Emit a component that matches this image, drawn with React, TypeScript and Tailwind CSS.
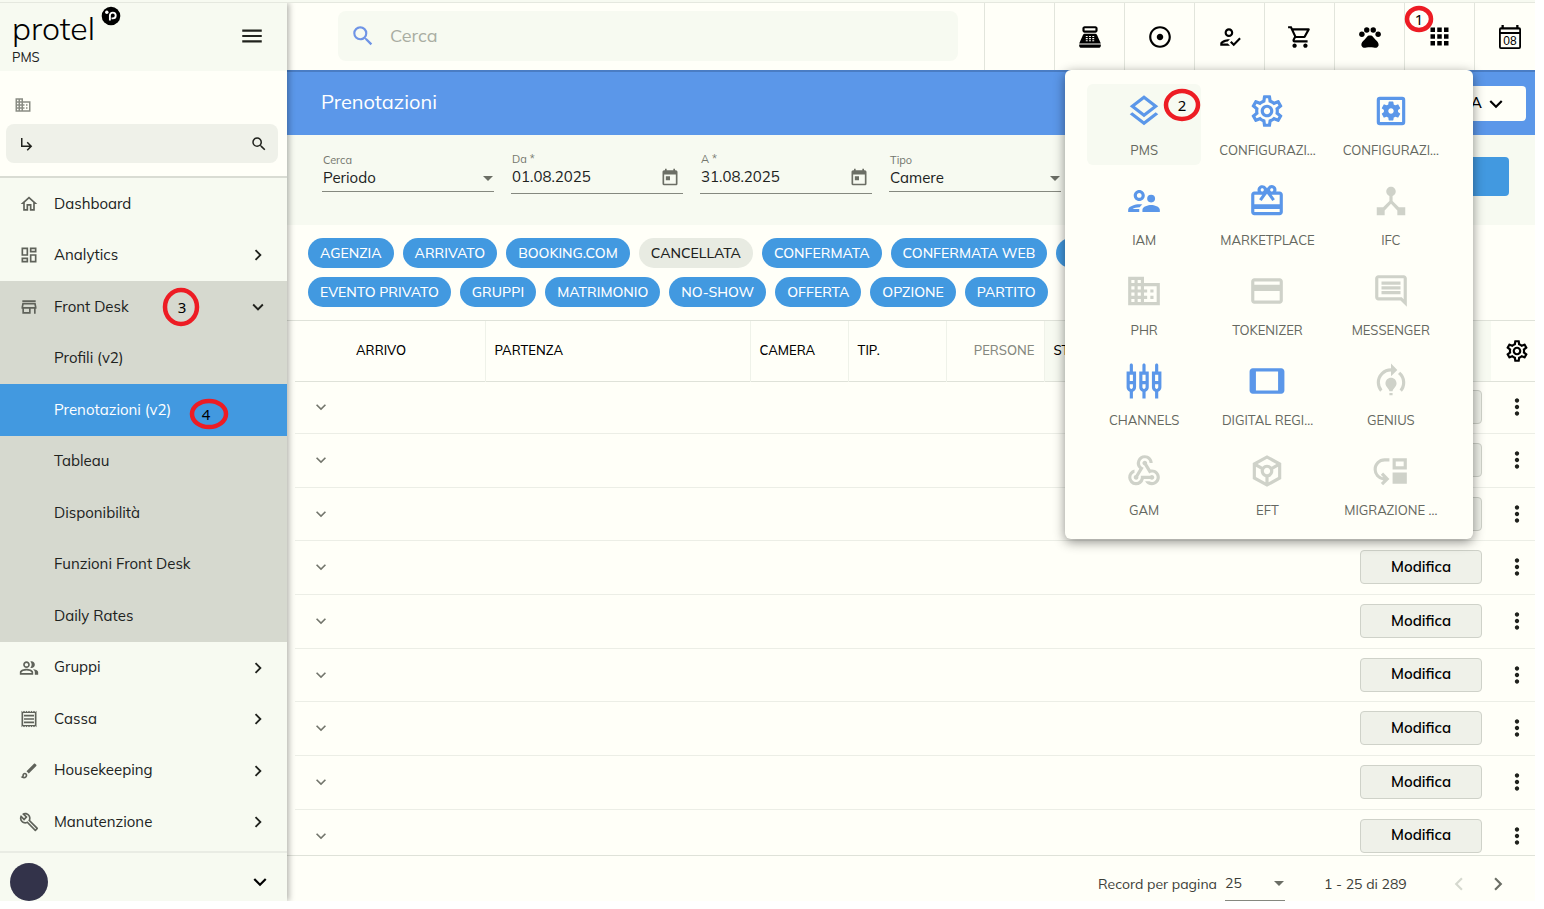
import React from 'react';
import type { ComponentType, ReactNode } from 'react';
import {
  MdAdjust,
  MdApps,
  MdArrowDropDown,
  MdChevronLeft,
  MdChevronRight,
  MdDeviceHub,
  MdExpandMore,
  MdMenu,
  MdModelTraining,
  MdMoreVert,
  MdMoveDown,
  MdOutlineBrush,
  MdOutlineBuild,
  MdOutlineBusiness,
  MdOutlineComment,
  MdOutlineCreditCard,
  MdOutlineDashboard,
  MdOutlineHome,
  MdOutlineHowToReg,
  MdOutlineLayers,
  MdOutlinePeopleAlt,
  MdOutlineReceipt,
  MdOutlineRedeem,
  MdOutlineSettings,
  MdOutlineSettingsApplications,
  MdOutlineSettingsInputComponent,
  MdOutlineShoppingCart,
  MdOutlineStore,
  MdOutlineSupervisorAccount,
  MdOutlineToken,
  MdPets,
  MdPointOfSale,
  MdSearch,
  MdSubdirectoryArrowRight,
  MdTablet,
  MdWebhook,
} from 'react-icons/md';

type Icon = ComponentType<{ size?: number | string; className?: string }>;

type NavEntry = {
  label: string;
  icon?: Icon;
  arrow?: 'right' | 'down';
  open?: boolean;
  active?: boolean;
  marker?: ReactNode;
};

function Marker({ label, rx, ry, className, shift = 0 }: { label: string; rx: number; ry: number; className: string; shift?: number }) {
  return (
    <svg
      aria-hidden="true"
      width={rx * 2 + 6}
      height={ry * 2 + 6}
      viewBox={`${-rx - 3} ${-ry - 3} ${rx * 2 + 6} ${ry * 2 + 6}`}
      className={`pointer-events-none absolute z-40 ${className}`}
    >
      <ellipse rx={rx} ry={ry} fill="none" stroke="#ed1c24" strokeWidth="4.500" />
      <text x={shift} y="6" textAnchor="middle" fontSize="15" fontFamily="'Noto Sans', sans-serif" fill="#000">
        {label}
      </text>
    </svg>
  );
}

const nav: NavEntry[] = [
  { label: 'Dashboard', icon: MdOutlineHome },
  { label: 'Analytics', icon: MdOutlineDashboard, arrow: 'right' },
  {
    label: 'Front Desk',
    icon: MdOutlineStore,
    arrow: 'down',
    open: true,
    marker: <Marker label="3" rx={16} ry={17} shift={1} className="left-[162px] top-1.5" />,
  },
  { label: 'Profili (v2)', open: true },
  {
    label: 'Prenotazioni (v2)',
    active: true,
    marker: <Marker label="4" rx={17} ry={13} shift={-3} className="left-[189px] top-3.5" />,
  },
  { label: 'Tableau', open: true },
  { label: 'Disponibilità', open: true },
  { label: 'Funzioni Front Desk', open: true },
  { label: 'Daily Rates', open: true },
  { label: 'Gruppi', icon: MdOutlinePeopleAlt, arrow: 'right' },
  { label: 'Cassa', icon: MdOutlineReceipt, arrow: 'right' },
  { label: 'Housekeeping', icon: MdOutlineBrush, arrow: 'right' },
  { label: 'Manutenzione', icon: MdOutlineBuild, arrow: 'right' },
];

const chipRows: { label: string; off?: boolean }[][] = [
  [
    { label: 'AGENZIA' },
    { label: 'ARRIVATO' },
    { label: 'BOOKING.COM' },
    { label: 'CANCELLATA', off: true },
    { label: 'CONFERMATA' },
    { label: 'CONFERMATA WEB' },
    { label: '' },
  ],
  [
    { label: 'EVENTO PRIVATO' },
    { label: 'GRUPPI' },
    { label: 'MATRIMONIO' },
    { label: 'NO-SHOW' },
    { label: 'OFFERTA' },
    { label: 'OPZIONE' },
    { label: 'PARTITO' },
  ],
];

const apps: { label: string; icon: Icon; on?: boolean }[] = [
  { label: 'PMS', icon: MdOutlineLayers, on: true },
  { label: 'CONFIGURAZI...', icon: MdOutlineSettings, on: true },
  { label: 'CONFIGURAZI...', icon: MdOutlineSettingsApplications, on: true },
  { label: 'IAM', icon: MdOutlineSupervisorAccount, on: true },
  { label: 'MARKETPLACE', icon: MdOutlineRedeem, on: true },
  { label: 'IFC', icon: MdDeviceHub },
  { label: 'PHR', icon: MdOutlineBusiness },
  { label: 'TOKENIZER', icon: MdOutlineCreditCard },
  { label: 'MESSENGER', icon: MdOutlineComment },
  { label: 'CHANNELS', icon: MdOutlineSettingsInputComponent, on: true },
  { label: 'DIGITAL REGI...', icon: MdTablet, on: true },
  { label: 'GENIUS', icon: MdModelTraining },
  { label: 'GAM', icon: MdWebhook },
  { label: 'EFT', icon: MdOutlineToken },
  { label: 'MIGRAZIONE ...', icon: MdMoveDown },
];

const rows = [1, 2, 3, 4, 5, 6, 7, 8, 9];

function CalendarDay({ size = 26 }: { size?: number | string }) {
  return (
    <svg width={size} height={size} viewBox="0 0 26 26" aria-hidden="true">
      <path
        fillRule="evenodd"
        d="M4.500 3.200V1h2.300v2.200h12.400V1h2.300v2.200H22a2 2 0 0 1 2 2V23a2 2 0 0 1-2 2H4a2 2 0 0 1-2-2V5.200a2 2 0 0 1 2-2ZM3.800 10v13.200h18.400V10Zm0-4.500v2.400h18.400V5.500Z"
      />
      <text x="13" y="21" textAnchor="middle" fontSize="12" fontFamily="'Liberation Sans', sans-serif">
        08
      </text>
    </svg>
  );
}

function CalendarIcon() {
  return (
    <svg width="20" height="20" viewBox="0 0 24 24" fill="currentColor" aria-hidden="true">
      <path d="M19 4h-1V2h-2v2H8V2H6v2H5c-1.110 0-1.990.9-1.990 2L3 20a2 2 0 0 0 2 2h14c1.100 0 2-.9 2-2V6c0-1.100-.9-2-2-2zm0 16H5V9h14v11zM7 11h5v5H7z" />
    </svg>
  );
}

function Logo() {
  return (
    <div className="flex flex-col pl-3">
      <div className="flex items-start">
        <span className="text-[32px] font-light leading-[50px] text-black">protel</span>
        <svg width="20" height="20" viewBox="0 0 20 20" aria-hidden="true" className="mt-[3px] ml-1.5">
          <circle cx="10" cy="10" r="9.300" fill="#000" />
          <circle cx="5.800" cy="6.200" r="1.700" fill="#fff" />
          <path d="M8.900 14.500V9.500a2.900 2.900 0 1 1 2.900 2.900H10.500" fill="none" stroke="#fff" strokeWidth="1.900" />
        </svg>
      </div>
      <span className="-mt-1 text-[13px] leading-4 text-[#20221d]">PMS</span>
    </div>
  );
}

function Sidebar() {
  return (
    <aside className="relative z-10 flex w-[287px] shrink-0 flex-col bg-[#f7faf1] shadow-[2px_0_6px_rgba(0,0,0,0.3)]">
      <div className="flex h-[68px] shrink-0 items-start justify-between">
        <Logo />
        <button type="button" aria-label="Menu" className="mt-5 mr-[22px]">
          <MdMenu size={26} />
        </button>
      </div>
      <div className="flex h-[107px] shrink-0 flex-col border-b-2 border-[#d9dcd3] bg-[#fffff8] pt-[25px] pr-[9px] pl-1.5">
        <MdOutlineBusiness size={18} className="ml-2 text-[#8a8d84]" />
        <div className="mt-2.5 flex h-[39px] items-center rounded-lg bg-[#eff1e9] pr-2.5 pl-3">
          <MdSubdirectoryArrowRight size={18} />
          <input type="text" aria-label="Cerca nel menu" className="min-w-0 flex-1 bg-transparent outline-none" />
          <MdSearch size={18} />
        </div>
      </div>
      <nav className="flex min-h-0 flex-1 flex-col pb-[3px]">
        {nav.map((item) => (
          <a
            key={item.label}
            href="#"
            className={`relative flex flex-1 items-center pr-[18px] pl-[19px] text-[15px] ${
              item.active ? 'bg-[#4299e0] text-white' : item.open ? 'bg-[#d6d9cf]' : ''
            }`}
          >
            <span className="w-[35px] text-[#5f625a]">{item.icon && <item.icon size={20} />}</span>
            <span className="flex-1">{item.label}</span>
            {item.arrow === 'right' && <MdChevronRight size={22} />}
            {item.arrow === 'down' && <MdExpandMore size={22} />}
            {item.marker}
          </a>
        ))}
      </nav>
      <div className="flex h-[50px] shrink-0 items-end justify-between border-t-2 border-[#e9ece4] pr-3.5 pl-2.5">
        <span className="size-[38px] rounded-full bg-[#33334a]" />
        <button type="button" aria-label="Profilo" className="mb-1.5 text-black">
          <MdExpandMore size={26} />
        </button>
      </div>
    </aside>
  );
}

function HeaderButton({ label, children }: { label: string; children?: ReactNode }) {
  return (
    <button type="button" aria-label={label} className="relative flex w-[70px] items-center justify-center border-l border-[#e2e5dc] text-black">
      {children}
    </button>
  );
}

function TopBar() {
  return (
    <header className="flex h-[67px] shrink-0 overflow-hidden pl-[51px]">
      <label className="mt-2 flex h-[50px] flex-1 items-center gap-3.5 rounded-lg bg-[#f7faf1] pl-3">
        <MdSearch size={26} className="text-[#6f94e6]" />
        <input
          type="search"
          aria-label="Cerca"
          placeholder="Cerca"
          className="min-w-0 flex-1 bg-transparent text-lg outline-none placeholder:text-[#a9ada2]"
        />
      </label>
      <div className="-mr-[9px] ml-[26px] flex">
        <HeaderButton label="Vuoto" />
        <HeaderButton label="Cassa">
          <MdPointOfSale size={26} />
        </HeaderButton>
        <HeaderButton label="Stato">
          <MdAdjust size={26} />
        </HeaderButton>
        <HeaderButton label="Registrazione">
          <MdOutlineHowToReg size={26} />
        </HeaderButton>
        <HeaderButton label="Carrello">
          <MdOutlineShoppingCart size={26} />
        </HeaderButton>
        <HeaderButton label="Animali">
          <MdPets size={26} />
        </HeaderButton>
        <HeaderButton label="Applicazioni">
          <MdApps size={27} />
          <Marker label="1" rx={12} ry={11} className="top-0.5 -left-px" />
        </HeaderButton>
        <HeaderButton label="Calendario">
          <CalendarDay />
        </HeaderButton>
      </div>
    </header>
  );
}

function SelectField({ id, label, value }: { id: string; label: string; value: string }) {
  return (
    <div className="flex w-[172px] flex-col pt-[18px]">
      <label htmlFor={id} className="px-px text-[11px] leading-[14px] text-[#73766d]">
        {label}
      </label>
      <div className="flex h-[25px] items-center border-b border-[#85887f] pb-[3px]">
        <select id={id} className="min-w-0 flex-1 appearance-none bg-transparent px-px text-[15px] leading-5 outline-none">
          <option>{value}</option>
        </select>
        <MdArrowDropDown size={24} className="pointer-events-none -mr-1.5 -ml-4 text-[#6b6e65]" />
      </div>
    </div>
  );
}

function DateField({ id, label, value }: { id: string; label: string; value: string }) {
  return (
    <div className="flex w-[172px] flex-col pt-[17px]">
      <label htmlFor={id} className="px-px text-[11px] leading-[14px] text-[#73766d]">
        {label}
      </label>
      <div className="flex h-7 items-center border-b border-[#85887f] pb-[5px]">
        <input id={id} type="text" defaultValue={value} className="min-w-0 flex-1 bg-transparent px-px text-[15px] leading-5 outline-none" />
        <button type="button" aria-label={`Apri calendario ${label}`} className="mr-[3px] text-[#6b6e65]">
          <CalendarIcon />
        </button>
      </div>
    </div>
  );
}

function Filters() {
  return (
    <form className="flex h-[90px] shrink-0 items-start gap-[17px] bg-[#f7faf1] pr-[26px] pl-[35px]">
      <SelectField id="search-by" label="Cerca" value="Periodo" />
      <DateField id="date-from" label="Da *" value="01.08.2025" />
      <DateField id="date-to" label="A *" value="31.08.2025" />
      <SelectField id="kind" label="Tipo" value="Camere" />
      <button type="button" aria-label="Esegui ricerca" className="mt-[22px] ml-auto h-[39px] w-[120px] rounded bg-[#4299e0]" />
    </form>
  );
}

function Chips() {
  return (
    <div className="flex h-[95px] shrink-0 flex-col gap-[9px] overflow-hidden pt-[13px] pl-[21px]">
      {chipRows.map((row, i) => (
        <div key={i} className="flex gap-[9px]">
          {row.map((chip) => (
            <button
              key={chip.label}
              type="button"
              aria-label={chip.label || 'Altro stato'}
              className={`h-[30px] min-w-[76px] shrink-0 rounded-full px-3 text-sm font-medium leading-5 ${
                chip.off ? 'bg-[#e8ebe2] text-[#20221d]' : 'bg-[#4299e0] text-white'
              }`}
            >
              {chip.label}
            </button>
          ))}
        </div>
      ))}
    </div>
  );
}

function ReservationTable() {
  return (
    <div className="min-h-0 flex-1 overflow-hidden border-y border-[#dfe2d9] pl-2">
      <table className="w-full table-fixed border-collapse text-left">
        <colgroup>
          <col className="w-[52px]" />
          <col className="w-[138px]" />
          <col className="w-[265px]" />
          <col className="w-[98px]" />
          <col className="w-[98px]" />
          <col className="w-[98px]" />
          <col />
          <col className="w-[140px]" />
          <col className="w-[44px]" />
        </colgroup>
        <thead>
          <tr className="h-[60px] border-b border-[#dfe2d9] text-[13px] text-black [&>th]:font-medium">
            <th aria-label="Espandi" />
            <th className="border-r border-[#eff2e9] pl-[9px]">ARRIVO</th>
            <th className="border-r border-[#eff2e9] pl-[9px]">PARTENZA</th>
            <th className="border-r border-[#eff2e9] pl-[9px]">CAMERA</th>
            <th className="border-r border-[#eff2e9] pl-[9px]">TIP.</th>
            <th className="border-r border-[#eff2e9] pr-[9px] text-right text-[#85887f]">PERSONE</th>
            <th className="bg-[#f7faf1] pl-[9px]">STATO</th>
            <th className="bg-[#f7faf1]" aria-label="Azioni" />
            <th>
              <button type="button" aria-label="Impostazioni tabella" className="ml-[13px] block">
                <MdOutlineSettings size={26} />
              </button>
            </th>
          </tr>
        </thead>
        <tbody>
          {rows.map((row) => (
            <tr key={row} className="h-[54px] border-b border-[#eceee6] first:h-[52px] nth-[3n]:h-[53px]">
              <td>
                <button type="button" aria-label={`Espandi riga ${row}`} className="ml-4 block text-[#73766d]">
                  <MdExpandMore size={20} />
                </button>
              </td>
              <td colSpan={6} />
              <td className="pr-[9px]">
                <button
                  type="button"
                  className="ml-auto block h-[34px] w-[122px] rounded border border-[#cfd2c9] bg-[#eff1e9] text-[15px] font-semibold text-black"
                >
                  Modifica
                </button>
              </td>
              <td>
                <button type="button" aria-label={`Azioni riga ${row}`} className="ml-[13px] block text-[#20221d]">
                  <MdMoreVert size={26} />
                </button>
              </td>
            </tr>
          ))}
        </tbody>
      </table>
    </div>
  );
}

function Pagination() {
  return (
    <footer className="flex h-[45px] shrink-0 items-center justify-end pt-2.5 pr-6 text-sm text-[#3c3e38]">
      <label htmlFor="page-size" className="mr-2">
        Record per pagina
      </label>
      <div className="flex h-[34px] w-[60px] items-center border-b border-[#85887f]">
        <select id="page-size" className="min-w-0 flex-1 appearance-none bg-transparent outline-none">
          <option>25</option>
        </select>
        <MdArrowDropDown size={24} className="pointer-events-none -mr-1.5 text-[#6b6e65]" />
      </div>
      <span className="ml-[39px] w-[122px]">1 - 25 di 289</span>
      <button type="button" aria-label="Pagina precedente" disabled className="mr-[13px] text-[#d6d9cf]">
        <MdChevronLeft size={26} />
      </button>
      <button type="button" aria-label="Pagina successiva" className="text-[#6b6e65]">
        <MdChevronRight size={26} />
      </button>
    </footer>
  );
}

function AppsMenu() {
  return (
    <div className="absolute top-[67px] right-[62px] z-30 grid w-[408px] grid-cols-3 gap-[9px] rounded-md bg-[#fffff8] py-3.5 pr-[25px] pl-[22px] shadow-[0_3px_12px_rgba(0,0,0,0.45)]">
      {apps.map((app, i) => (
        <button
          key={i}
          type="button"
          className={`relative flex h-[81px] flex-col items-center rounded-md pt-2 text-[13px] leading-5 text-[#656860] ${
            i === 0 ? 'bg-[#f7faf1]' : ''
          }`}
        >
          <app.icon size={38} className={app.on ? 'text-[#5b97e9]' : 'text-[#cfd2c9]'} />
          <span className="mt-2.5 whitespace-nowrap">{app.label}</span>
          {i === 0 && <Marker label="2" rx={16} ry={14} className="top-1 right-0" />}
        </button>
      ))}
    </div>
  );
}

export default function App() {
  return (
    <div className="flex h-screen min-h-[700px] flex-col bg-white pr-[9px] pb-2 font-['Mulish','Lato',sans-serif] text-[#20221d]">
      <div className="h-[3px] shrink-0 border-b border-[#e5e8df] bg-[#f7faf1]" />
      <div className="flex min-h-0 flex-1 overflow-hidden bg-[#fffff8]">
        <Sidebar />
        <main className="relative flex min-w-0 flex-1 flex-col">
          <TopBar />
          <div className="flex h-[65px] shrink-0 items-center justify-between border-t-2 border-[#4a7dc4] bg-[#5b97e9] pr-[9px] pl-[34px]">
            <h1 className="pb-1 text-xl text-white">Prenotazioni</h1>
            <button type="button" className="flex h-[35px] w-[120px] items-center justify-end gap-px rounded bg-[#fffff8] pr-[17px] text-[15px] font-semibold text-black">
              A
              <MdExpandMore size={26} />
            </button>
          </div>
          <Filters />
          <Chips />
          <ReservationTable />
          <Pagination />
          <AppsMenu />
        </main>
      </div>
    </div>
  );
}
